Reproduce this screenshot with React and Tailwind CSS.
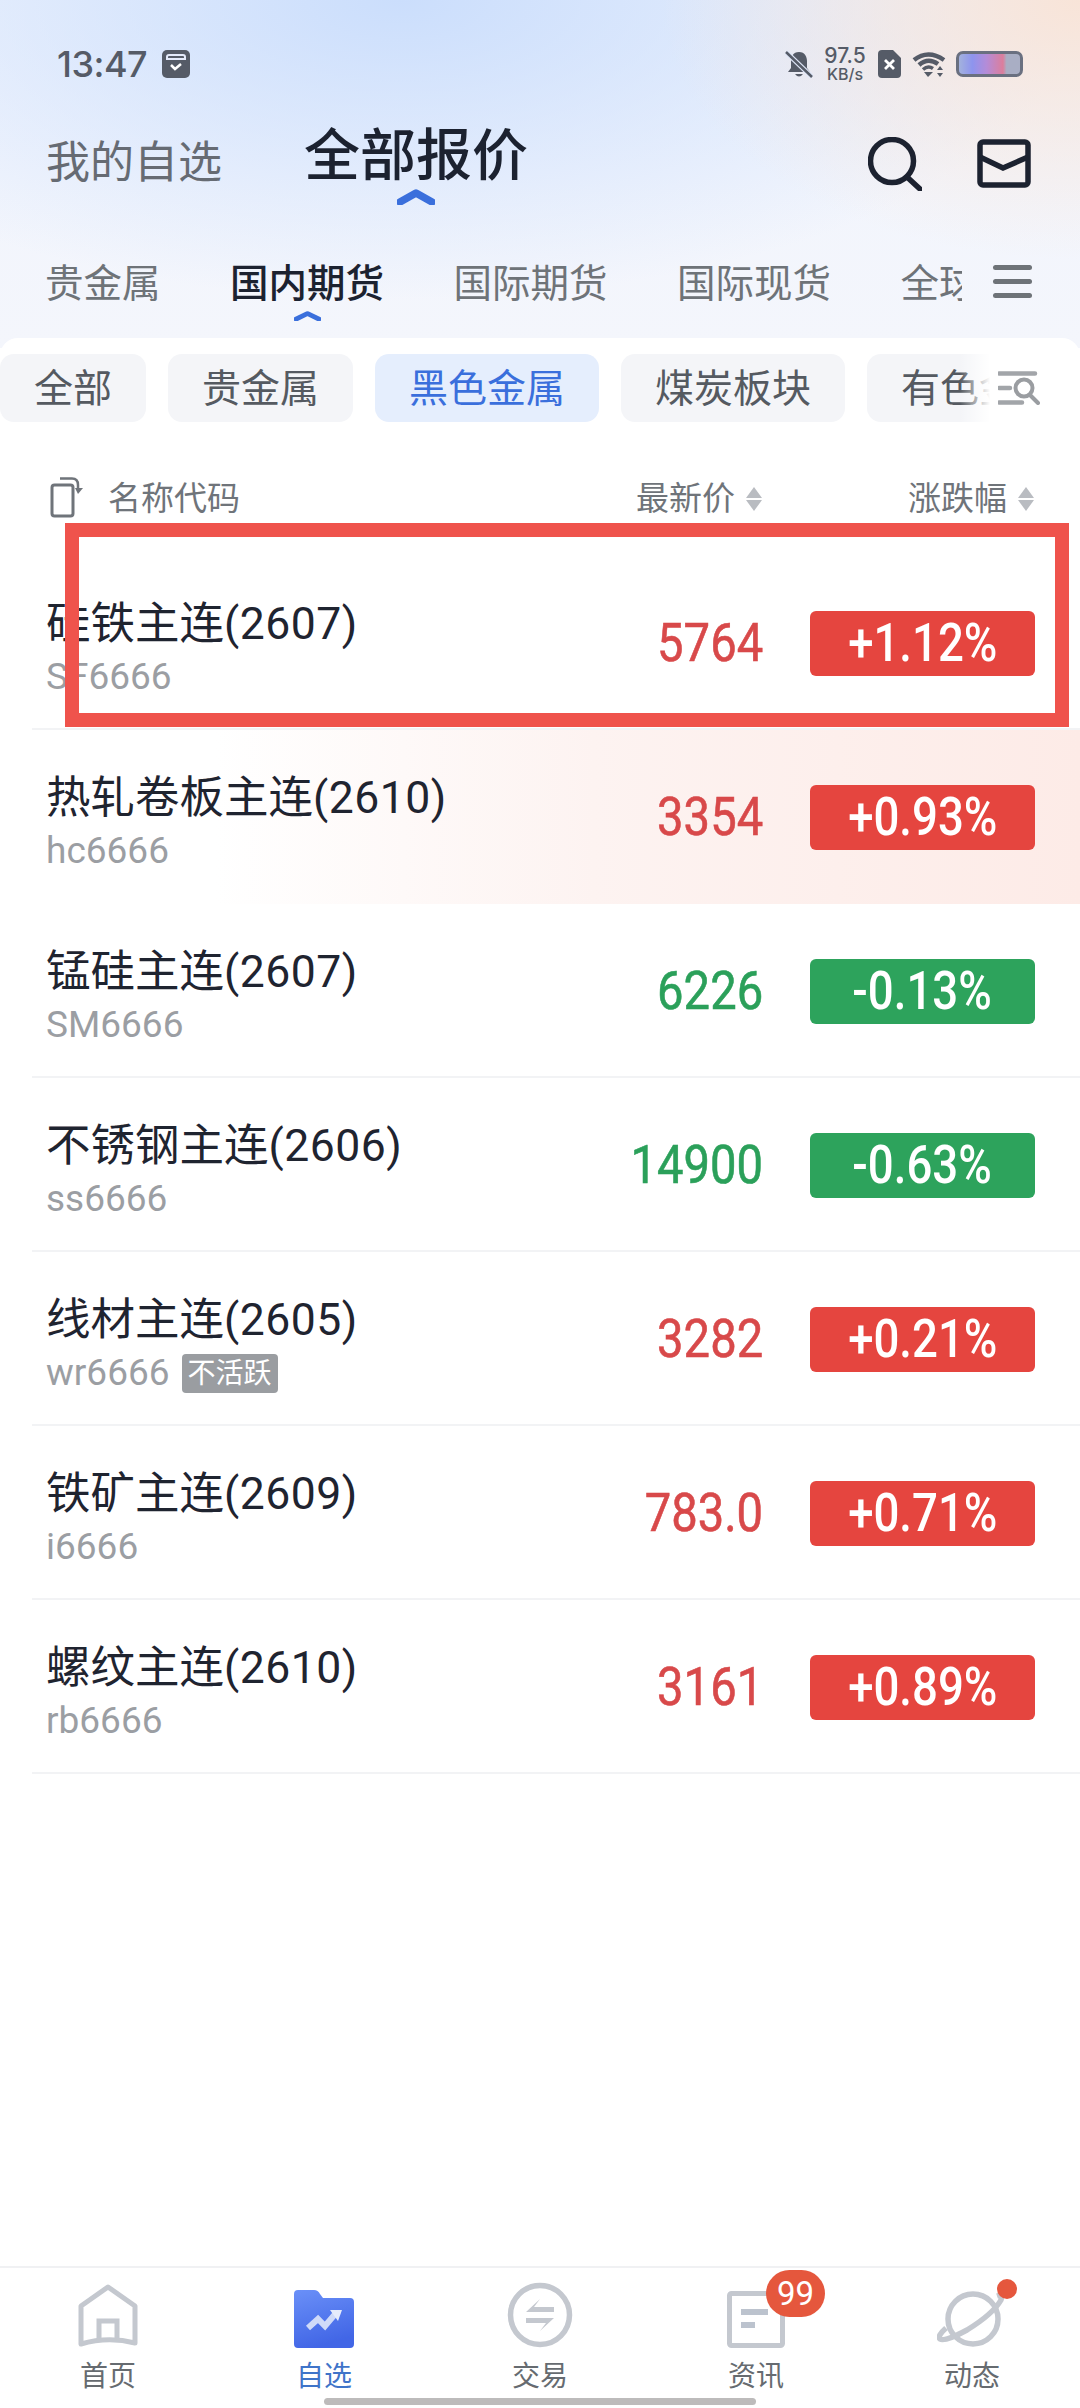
import React from "react";

const rows = [
  { name: "硅铁主连", month: "(2607)", code: "SF6666", price: "5764", pct: "+1.12%", up: true },
  { name: "热轧卷板主连", month: "(2610)", code: "hc6666", price: "3354", pct: "+0.93%", up: true, hot: true },
  { name: "锰硅主连", month: "(2607)", code: "SM6666", price: "6226", pct: "-0.13%", up: false },
  { name: "不锈钢主连", month: "(2606)", code: "ss6666", price: "14900", pct: "-0.63%", up: false },
  { name: "线材主连", month: "(2605)", code: "wr6666", price: "3282", pct: "+0.21%", up: true, tag: "不活跃" },
  { name: "铁矿主连", month: "(2609)", code: "i6666", price: "783.0", pct: "+0.71%", up: true },
  { name: "螺纹主连", month: "(2610)", code: "rb6666", price: "3161", pct: "+0.89%", up: true },
];

function Chevron({ w, h }) {
  return (
    <svg width={w} height={h} viewBox="0 0 38 16" className="block" preserveAspectRatio="none">
      <path d="M3 13 L19 4 L35 13" fill="none" stroke="#3a6fdc" strokeWidth="7.5" strokeLinecap="round" strokeLinejoin="round" />
    </svg>
  );
}

function Sort() {
  return (
    <svg width="18" height="26" viewBox="0 0 18 26" className="block">
      <path d="M9 1 L17 12 H1 Z" fill="#b9bcc1" />
      <path d="M9 25 L17 14 H1 Z" fill="#b9bcc1" />
    </svg>
  );
}

function StatusBar() {
  return (
    <div className="h-[128px] pl-[57px] pr-[57px] flex items-center justify-between">
      <div className="flex items-center gap-[15px]">
        <span className="text-[36px] leading-[36px] font-medium text-[#555b67] font-['Inter',sans-serif] tracking-[-0.5px]">13:47</span>
        <svg width="28" height="28" viewBox="0 0 28 28" className="block">
          <rect width="28" height="28" rx="5" fill="#555b67" />
          <path d="M5 9 V7 Q5 5 7 5 H21 Q23 5 23 7 V9 Z" fill="none" stroke="#e4eafa" strokeWidth="2" />
          <path d="M9 15 L13 19 L19 14" fill="none" stroke="#fff" strokeWidth="2.5" />
        </svg>
      </div>
      <div className="flex items-center">
        <svg width="28" height="30" viewBox="0 0 28 30" className="block">
          <path d="M14 3 C8 3 6 8 6 12 V19 L3 23 H25 L22 19 V12 C22 8 20 3 14 3 Z" fill="#555b67" />
          <path d="M10 25 Q14 30 18 25 Z" fill="#555b67" />
          <path d="M1 3 L27 28" stroke="#dfe6f7" strokeWidth="5" />
          <path d="M1 3 L27 28" stroke="#555b67" strokeWidth="2.5" />
        </svg>
        <div className="ml-[8px] w-[48px] flex flex-col items-center font-['Inter',sans-serif] font-medium text-[#555b67]">
          <span className="text-[21px] leading-[20px]">97.5</span>
          <span className="text-[16px] leading-[16px]">KB/s</span>
        </div>
        <svg width="23" height="28" viewBox="0 0 23 28" className="block ml-[9px]">
          <path d="M4 0 H15 L23 8 V24 Q23 28 19 28 H4 Q0 28 0 24 V4 Q0 0 4 0 Z" fill="#555b67" />
          <path d="M7 10 L16 19 M16 10 L7 19" stroke="#fff" strokeWidth="2.8" />
        </svg>
        <svg width="34" height="26" viewBox="0 0 34 26" className="block ml-[11px]">
          <path d="M2 9 Q16 -2 32 9" fill="none" stroke="#555b67" strokeWidth="4.5" />
          <path d="M7 14 Q16 6 26 13" fill="none" stroke="#555b67" strokeWidth="4.5" />
          <path d="M11 18.5 Q16 14 21 17.5" fill="none" stroke="#555b67" strokeWidth="3.5" />
          <path d="M12 21 H21 L16 26 Z" fill="#555b67" />
          <path d="M28 15 L31 19 H25 Z M28 26 L31 22 H25 Z" fill="#555b67" />
        </svg>
        <div className="ml-[10px] w-[67px] h-[26px] rounded-[7px] border-[3px] border-[#6a7080] bg-[linear-gradient(90deg,#a3b2dd_0%,#8e94ee_22%,#b48cd8_45%,#dc7e9c_72%,#a9aec4_78%,#a9aec4_100%)]" />
      </div>
    </div>
  );
}

function Header() {
  return (
    <div className="h-[110px] pl-[46px] pr-[48px] flex items-start justify-between">
      <div className="flex items-start">
        <span className="text-[44px] leading-[60px] mt-[5px] text-[#666b73]">我的自选</span>
        <div className="ml-[82px] flex flex-col items-center -mt-[1px]">
          <span className="text-[56px] leading-[58px] font-medium text-[#1c2230]">全部报价</span>
          <div className="mt-[4px]"><Chevron w={38} h={16} /></div>
        </div>
      </div>
      <div className="flex items-start gap-[55px] mt-[9px]">
        <svg width="54" height="54" viewBox="0 0 54 54" className="block">
          <circle cx="24" cy="24" r="21.5" fill="none" stroke="#1c2230" strokeWidth="5.5" />
          <path d="M39 40 L52 52" stroke="#1c2230" strokeWidth="5.5" strokeLinecap="round" />
        </svg>
        <svg width="54" height="50" viewBox="0 0 54 50" className="block mt-[2px] mr-[1px]">
          <rect x="3" y="3" width="48" height="43" rx="3" fill="none" stroke="#1c2230" strokeWidth="5.5" />
          <path d="M3 18 L26 29 L51 18" fill="none" stroke="#1c2230" strokeWidth="5.5" />
        </svg>
      </div>
    </div>
  );
}

function Tabs() {
  const tabs = ["贵金属", "国内期货", "国际期货", "国际现货", "全球期货"];
  return (
    <div className="h-[100px] flex items-start">
      <div className="w-[962px] overflow-hidden flex gap-[69.5px] pl-[45px] shrink-0 whitespace-nowrap pt-[22px]">
        {tabs.map((t, i) => (
          <div key={t} className="flex flex-col items-center shrink-0">
            <span className={`text-[38.5px] leading-[48px] ${i === 1 ? "text-[#1c2230] font-medium" : "text-[#6e7378]"}`}>{t}</span>
            <div className="mt-[3px] h-[10px]">{i === 1 ? <Chevron w={27} h={10} /> : null}</div>
          </div>
        ))}
      </div>
      <div className="ml-[31px] mt-[27px] w-[39px] flex flex-col gap-[9px]">
        <div className="h-[5px] rounded-full bg-[#6e7378]" />
        <div className="h-[5px] rounded-full bg-[#6e7378]" />
        <div className="h-[5px] rounded-full bg-[#6e7378]" />
      </div>
    </div>
  );
}

function Chips() {
  const chips = ["全部", "贵金属", "黑色金属", "煤炭板块", "有色金属"];
  return (
    <div className="relative h-[68px] mt-[16px] overflow-hidden">
      <div className="flex gap-[22px] whitespace-nowrap">
        {chips.map((c, i) => (
          <div key={c} className={`h-[68px] px-[34px] rounded-[14px] flex items-center shrink-0 text-[39px] leading-[70px] pt-[2px] ${i === 2 ? "bg-[#e5eefd] text-[#3a6fdc]" : "bg-[#f4f5f8] text-[#555a61]"}`}>{c}</div>
        ))}
      </div>
      <div className="absolute right-0 top-0 h-[68px] w-[120px] flex items-center justify-end pr-[40px] bg-[linear-gradient(90deg,rgba(255,255,255,0)_0%,#fff_25%)]">
        <svg width="42" height="34" viewBox="0 0 42 34" className="block">
          <path d="M1 2.5 H37 M1 17 H12 M1 31.5 H24" stroke="#a2a5a9" strokeWidth="4.5" strokeLinecap="round" />
          <circle cx="26" cy="17" r="8.5" fill="none" stroke="#9a9da1" strokeWidth="4" />
          <path d="M32 24 L40 32" stroke="#9a9da1" strokeWidth="4" strokeLinecap="round" />
        </svg>
      </div>
    </div>
  );
}

function ColumnHeader() {
  return (
    <div className="h-[134px] flex items-start pt-[55px] pl-[50px] pr-[45px] text-[33px] leading-[44px] text-[#6f747a]">
      <svg width="34" height="42" viewBox="0 0 34 42" className="block -mt-[1px]">
        <rect x="2" y="9" width="21" height="31" rx="2.5" fill="none" stroke="#6f747a" strokeWidth="3" />
        <path d="M10 2.5 H22 Q28 2.5 28 9 V14" fill="none" stroke="#6f747a" strokeWidth="2.5" />
        <path d="M25 12 H33 L28 18 Z" fill="#6f747a" />
      </svg>
      <span className="ml-[24px]">名称代码</span>
      <span className="ml-auto">最新价</span>
      <div className="ml-[10px] mt-[9px]"><Sort /></div>
      <span className="ml-[145px]">涨跌幅</span>
      <div className="ml-[10px] mt-[9px]"><Sort /></div>
    </div>
  );
}

function Row({ r }) {
  const digit = r.up ? "text-[#d8494a]" : "text-[#2ba05a]";
  const pill = r.up ? "bg-[#e5453f]" : "bg-[#2da35c]";
  return (
    <div className={`h-[174px] pl-[46px] pr-[45px] flex items-center relative ${r.hot ? "bg-[linear-gradient(90deg,#ffffff_20%,#fdf3f1_55%,#fdebe7_100%)]" : ""}`}>
      <div className={`absolute left-[32px] right-0 bottom-0 h-[2px] ${r.hot ? "" : "bg-[#f2f3f5]"}`} />
      <div className="flex-1 self-start pt-[40px]">
        <div className="text-[44.5px] leading-[56px] text-[#1f2430] whitespace-nowrap">
          {r.name}
          <span className="tracking-[0.5px]">{r.month}</span>
        </div>
        <div className="mt-[3px] flex items-center h-[44px]">
          <span className="text-[37px] leading-[44px] text-[#9b9ea3]">{r.code}</span>
          {r.tag ? (
            <span className="ml-[12px] w-[96px] h-[39px] rounded-[4px] bg-[#9a9da1] text-white text-[28px] leading-[39px] text-center">{r.tag}</span>
          ) : null}
        </div>
      </div>
      <div className={`text-[53px] leading-[60px] [-webkit-text-stroke:0.6px] origin-right scale-x-[0.89] ${digit}`}>{r.price}</div>
      <div className={`ml-[47px] w-[225px] h-[65px] rounded-[6px] flex items-center justify-center text-white text-[53px] leading-[60px] font-medium ${pill}`}>
        <span className="scale-x-[0.86]">{r.pct}</span>
      </div>
    </div>
  );
}

function BottomNav() {
  const stroke = "#c4c8cf";
  const items = [
    {
      label: "首页",
      icon: (
        <svg width="60" height="64" viewBox="0 0 60 64" className="block">
          <path d="M3 22 L30 3 L57 22 V59 Q30 52 3 60 Z" fill="none" stroke={stroke} strokeWidth="5" strokeLinejoin="round" />
          <path d="M21 55 V37 H39 V55" fill="none" stroke={stroke} strokeWidth="5" />
        </svg>
      ),
    },
    {
      label: "自选",
      active: true,
      icon: (
        <svg width="60" height="58" viewBox="0 0 60 58" className="block">
          <defs>
            <linearGradient id="fold" x1="0" y1="0" x2="0.3" y2="1">
              <stop offset="0" stopColor="#6a90f8" />
              <stop offset="1" stopColor="#4266e6" />
            </linearGradient>
          </defs>
          <path d="M4 0 H20 Q24 0 26 4 L29 8 H56 Q60 8 60 12 V54 Q60 58 56 58 H4 Q0 58 0 54 V4 Q0 0 4 0 Z" fill="url(#fold)" />
          <path d="M14 38 L24 29 L31 36 L42 23" fill="none" stroke="#cfdaf8" strokeWidth="6" />
          <path d="M36 20 H48 L44 31 Z" fill="#e6ecfb" />
        </svg>
      ),
    },
    {
      label: "交易",
      icon: (
        <svg width="66" height="66" viewBox="0 0 66 66" className="block">
          <circle cx="33" cy="33" r="29.5" fill="none" stroke={stroke} strokeWidth="5.5" />
          <path d="M19 30 H47 V25 H27 L33 17 Z" fill={stroke} />
          <path d="M47 36 H19 V41 H39 L33 49 Z" fill={stroke} />
        </svg>
      ),
    },
    {
      label: "资讯",
      icon: (
        <div className="relative">
          <svg width="58" height="57" viewBox="0 0 58 57" className="block">
            <rect x="2.5" y="2.5" width="53" height="52" rx="2" fill="none" stroke={stroke} strokeWidth="5" />
            <path d="M14 21 H41" stroke="#bcc3ce" strokeWidth="6" />
            <path d="M14 34 H28" stroke="#bcc3ce" strokeWidth="6" />
          </svg>
          <div className="absolute left-[39px] -top-[21px] w-[59px] h-[47px] rounded-full bg-[#e5573d] text-white text-[33px] leading-[47px] text-center">99</div>
        </div>
      ),
    },
    {
      label: "动态",
      icon: (
        <div className="relative">
          <svg width="70" height="58" viewBox="0 0 70 58" className="block">
            <circle cx="36" cy="29" r="25" fill="none" stroke={stroke} strokeWidth="5.5" />
            <path d="M60 6 Q66 4 64 10 Q56 24 30 40 Q8 52 3 49 Q0 46 9 38" fill="none" stroke={stroke} strokeWidth="5.5" />
          </svg>
          <div className="absolute left-[60px] -top-[11px] w-[20px] h-[20px] rounded-full bg-[#e5573d]" />
        </div>
      ),
    },
  ];
  return (
    <div className="h-[142px] border-t-[2px] border-[#f0f1f3] grid grid-cols-5 shrink-0">
      {items.map((it) => (
        <div key={it.label} className="flex flex-col items-center">
          <div className="h-[82px] flex items-end justify-center pb-[2px]">{it.icon}</div>
          <span className={`mt-[9px] text-[28px] leading-[36px] ${it.active ? "text-[#3f74c9]" : "text-[#666b70]"}`}>{it.label}</span>
        </div>
      ))}
    </div>
  );
}

export default function App() {
  return (
    <div className="relative w-[1080px] h-[2408px] overflow-hidden flex flex-col bg-white font-['Roboto','Noto_Sans_CJK_SC',sans-serif]">
      <div className="bg-[radial-gradient(ellipse_420px_260px_at_1080px_0px,#f8e4d8_0%,rgba(248,228,216,0)_100%),radial-gradient(ellipse_680px_300px_at_400px_0px,#cbdefc_0%,rgba(203,222,252,0)_100%),linear-gradient(180deg,#f0f4fd_0%,#f4f6fc_100%)] h-[348px] shrink-0">
        <StatusBar />
        <Header />
        <Tabs />
      </div>
      <div className="-mt-[10px] rounded-t-[18px] bg-white flex-1 flex flex-col">
        <Chips />
        <ColumnHeader />
        <div className="flex-1">
          {rows.map((r) => (
            <Row key={r.code} r={r} />
          ))}
        </div>
        <BottomNav />
      </div>
      <div className="absolute left-[65px] top-[523px] w-[1004px] h-[204px] border-[14px] border-[#ef534c]" />
      <div className="absolute left-[324px] top-[2398px] w-[432px] h-[7px] rounded-full bg-[#bdbbbb]" />
    </div>
  );
}
